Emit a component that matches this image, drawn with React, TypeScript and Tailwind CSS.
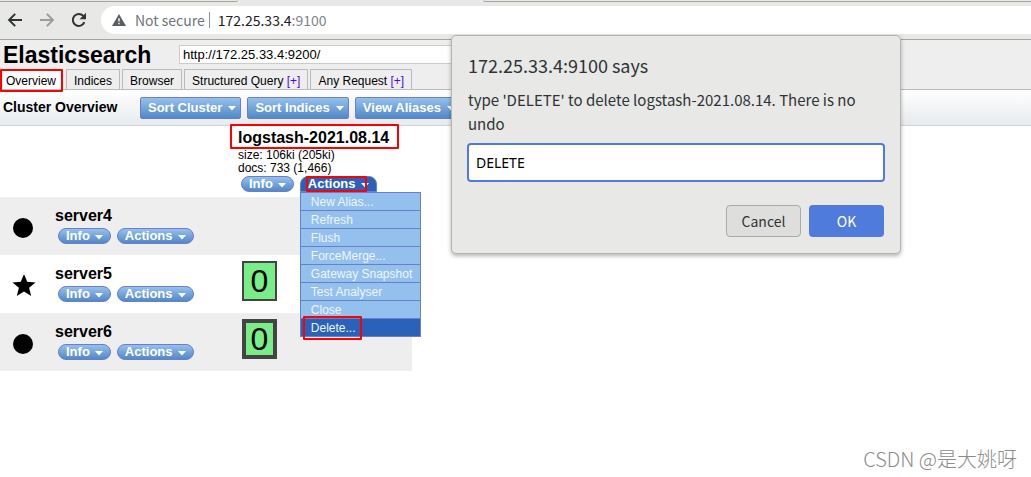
import { useState } from "react";
import clsx from "clsx";

const MENU_ITEMS = [
  "New Alias...",
  "Refresh",
  "Flush",
  "ForceMerge...",
  "Gateway Snapshot",
  "Test Analyser",
  "Close",
  "Delete...",
];

const TABS = [
  { name: "Overview" },
  { name: "Indices" },
  { name: "Browser" },
  { name: "Structured Query", extra: true },
  { name: "Any Request", extra: true },
];

type Node = { name: string; master?: boolean; shard?: "primary" | "replica" };

const NODES: Node[] = [
  { name: "server4" },
  { name: "server5", master: true, shard: "replica" },
  { name: "server6", shard: "primary" },
];

export default function App() {
  return (
    <div className="relative min-h-screen overflow-hidden bg-white font-['Liberation_Sans',Arial,sans-serif] text-black">
      <BrowserBar />
      <Header />
      <Toolbar />
      <ClusterTable />
      <PromptDialog />
      <p className="absolute right-3.5 bottom-1 font-['Noto_Sans_CJK_SC',sans-serif] text-[20px] leading-7 font-light text-[#8c8c8c]">
        CSDN @是大姚呀
      </p>
    </div>
  );
}

function BrowserBar() {
  return (
    <div className="border-b border-[#a3a5a1] bg-[#e8e8e6]">
      <div className="flex h-[6px] items-start">
        <div className="h-[2px] w-[238px] rounded-br-[2px] border-b border-[#a3a5a1]" />
        <div className="w-[245px]" />
        <div className="h-[2px] flex-1 rounded-bl-[2px] border-b border-[#a3a5a1]" />
      </div>
      <div className="mb-[5px] flex h-7 items-center">
        <div className="flex w-[101px] shrink-0 items-center gap-4 pl-[7px]">
          <button aria-label="Back">
            <svg width="16" height="16" viewBox="0 0 16 16" fill="none" stroke="#2e3436" strokeWidth="2">
              <path d="M15 8H2.4M8.2 1.9 2.1 8l6.1 6.1" />
            </svg>
          </button>
          <button aria-label="Forward">
            <svg width="16" height="16" viewBox="0 0 16 16" fill="none" stroke="#9b9d9b" strokeWidth="2">
              <path d="M1 8h12.6M7.8 1.9 13.9 8l-6.1 6.1" />
            </svg>
          </button>
          <button aria-label="Reload">
            <svg width="16" height="16" viewBox="0 0 16 16" fill="none">
              <path d="M13.4 10.2A6 6 0 1 1 12.3 3.9L14 5.6" stroke="#2e3436" strokeWidth="2" />
              <path d="M15 .8v6.4H8.6z" fill="#2e3436" />
            </svg>
          </button>
        </div>
        <div className="flex h-7 flex-1 items-center rounded-l-full bg-white pl-[11px] font-['Noto_Sans_CJK_SC',sans-serif] text-sm">
          <svg width="14" height="12" viewBox="0 0 14 12" fill="#5a5f61">
            <path fillRule="evenodd" d="M7 0 14 12H0zM6.3 4.3v3.2h1.4V4.3zM6.3 8.7v1.5h1.4V8.7z" />
          </svg>
          <span className="ml-[9px] text-[#70757a]">Not secure</span>
          <span className="mr-2 ml-1 h-4 w-px bg-[#8f9396]" />
          <span className="text-[#202124]">
            172.25.33.4<span className="text-[#80868b]">:9100</span>
          </span>
        </div>
      </div>
    </div>
  );
}

function Header() {
  const [url, setUrl] = useState("http://172.25.33.4:9200/");

  return (
    <header className="border-b border-[#bbb] bg-[#eee]">
      <div className="flex h-[29px] items-center">
        <h1 className="w-[179px] pl-[3px] text-[23px] leading-7 font-bold">Elasticsearch</h1>
        <input
          aria-label="Cluster address"
          value={url}
          onChange={(e) => setUrl(e.target.value)}
          className="h-[19px] w-[320px] border border-[#ccc] bg-white px-[3px] text-[13px] outline-none"
        />
      </div>
      <nav className="flex h-5 gap-0.5">
        {TABS.map((tab, i) => (
          <a
            key={tab.name}
            href="#"
            className={clsx(
              "relative h-5 px-[7px] text-[12px] leading-[23px] whitespace-nowrap",
              i === 0 ? "mr-px bg-white pt-px pl-1.5" : "border border-b-0 border-[#bbb]"
            )}
          >
            {tab.name}
            {tab.extra && <span className="text-[#50f]"> [+]</span>}
            {i === 0 && <Mark className="top-0 right-0 -bottom-[3px] left-0" />}
          </a>
        ))}
      </nav>
    </header>
  );
}

function Toolbar() {
  return (
    <div className="flex h-9 items-center border-b border-[#ced3d8] bg-linear-to-b from-white to-[#e7ebee] pl-[3px]">
      <h2 className="w-[137px] text-[14px] font-bold">Cluster Overview</h2>
      <div className="flex gap-1.5">
        {["Sort Cluster", "Sort Indices", "View Aliases"].map((label) => (
          <button
            key={label}
            className="flex h-[22px] items-center gap-1.5 rounded-[2px] border border-[#6a7fcb] bg-linear-to-b from-[#96c0ed] to-[#5089c8] pr-1 pl-[7px] text-[13px] font-bold text-white"
          >
            {label}
            <Caret />
          </button>
        ))}
      </div>
    </div>
  );
}

function ClusterTable() {
  return (
    <table className="w-[412px] border-collapse text-left">
      <thead>
        <tr className="h-[71px] align-top">
          <td className="w-[55px]" />
          <td className="w-[183px]" />
          <th className="font-normal">
            <div className="relative w-fit text-[16px] leading-[23px] font-bold">
              logstash-2021.08.14
              <Mark className="-top-0.5 -right-2.5 bottom-0 -left-2" />
            </div>
            <div className="text-[12px] leading-[13px]">size: 106ki (205ki)</div>
            <div className="text-[12px] leading-[13px]">docs: 733 (1,466)</div>
            <div className="mt-px flex gap-1.5 pl-[3px]">
              <PillButton label="Info" />
              <div className="relative">
                <PillButton label="Actions" open />
                <Mark className="top-0 right-2.5 bottom-0 left-1.5" />
                <ActionsMenu />
              </div>
            </div>
          </th>
        </tr>
      </thead>
      <tbody>
        {NODES.map((node) => (
          <tr key={node.name} className="h-[58px] align-top odd:bg-[#eee]">
            <td className="pt-5 pl-3">
              {node.master ? (
                <svg width="24" height="22" viewBox="0 1 24 22">
                  <path d="m12 0 3.2 7.8 8.3.6-6.4 5.4 2.1 8.2L12 17.5 4.8 22l2.1-8.2L.5 8.4l8.3-.6z" />
                </svg>
              ) : (
                <svg width="22" height="22" viewBox="0 0 22 22">
                  <circle cx="11" cy="11" r="10" />
                </svg>
              )}
            </td>
            <td className="pt-[9px]">
              <div className="text-[16px] leading-5 font-bold">{node.name}</div>
              <div className="mt-0.5 flex gap-1.5 pl-[3px]">
                <PillButton label="Info" />
                <PillButton label="Actions" />
              </div>
            </td>
            <td className="pt-1.5 pl-1">
              {node.shard && (
                <button
                  className={clsx(
                    "flex h-10 w-[35px] items-center justify-center border-[#444] bg-[#7e8] text-[32px] leading-8",
                    node.shard === "primary" ? "border-4" : "border-2"
                  )}
                >
                  0
                </button>
              )}
            </td>
          </tr>
        ))}
      </tbody>
    </table>
  );
}

function ActionsMenu() {
  return (
    <ul className="absolute top-full left-0 z-10 w-[121px] border border-[#6a7fcb] bg-[#94c0ee]">
      {MENU_ITEMS.map((item, i) => {
        const last = i === MENU_ITEMS.length - 1;
        return (
          <li key={item} className={clsx("relative", last ? "bg-[#2b62b9]" : "border-b border-[#6a7fcb]")}>
            <button className="block h-[17px] w-full pl-2.5 text-left text-[12px] leading-[18px] whitespace-nowrap text-[#eef5fd]">
              {item}
            </button>
            {last && <Mark className="-top-[3px] right-[58px] -bottom-1 left-0.5" />}
          </li>
        );
      })}
    </ul>
  );
}

function PillButton({ label, open }: { label: string; open?: boolean }) {
  return (
    <button
      className={clsx(
        "flex h-4 items-center gap-[5px] border border-[#6a7fcb] px-[7px] text-[13px] leading-4 font-bold text-white",
        open ? "rounded-t-lg bg-[#2b62b9]" : "rounded-full bg-linear-to-b from-[#96c0ed] to-[#5089c8]"
      )}
    >
      {label}
      <Caret />
    </button>
  );
}

function Caret() {
  return (
    <svg width="8" height="5" viewBox="0 0 8 5" fill="#fff" className="mt-0.5">
      <path d="M0 0h8L4 4.5z" />
    </svg>
  );
}

function Mark({ className }: { className: string }) {
  return <span className={clsx("pointer-events-none absolute z-20 rounded-[1px] border-2 border-[#f00]", className)} />;
}

function PromptDialog() {
  const [answer, setAnswer] = useState("DELETE");

  return (
    <form
      role="dialog"
      aria-labelledby="prompt-title"
      onSubmit={(e) => e.preventDefault()}
      className="absolute top-[35px] left-[451px] z-30 w-[450px] rounded-[5px] border border-[#b4b6b3] bg-[#e8e8e6] px-[15px] py-4 font-['Noto_Sans_CJK_SC',sans-serif] text-[#2e3436] shadow-[0_2px_4px_rgba(0,0,0,0.3)]"
    >
      <h2 id="prompt-title" className="pl-px text-[18px] leading-[26px]">172.25.33.4:9100 says</h2>
      <label htmlFor="prompt-answer" className="mt-2.5 block pl-px text-[15px] leading-6">
        type 'DELETE' to delete logstash-2021.08.14. There is no undo
      </label>
      <input
        id="prompt-answer"
        value={answer}
        onChange={(e) => setAnswer(e.target.value)}
        className="mt-[7px] block h-[39px] w-full rounded-[4px] border-2 border-[#4f7bdc] bg-white px-[7px] font-['Noto_Sans',sans-serif] text-[14px] text-black outline-none"
      />
      <div className="mt-[23px] flex justify-end gap-2 pr-px text-[14px]">
        <button type="button" className="h-8 w-[75px] rounded-[4px] border border-[#a9aba8] bg-[#dededc]">
          Cancel
        </button>
        <button type="submit" className="h-8 w-[75px] rounded-[4px] bg-[#4f7bdc] text-white">
          OK
        </button>
      </div>
    </form>
  );
}
